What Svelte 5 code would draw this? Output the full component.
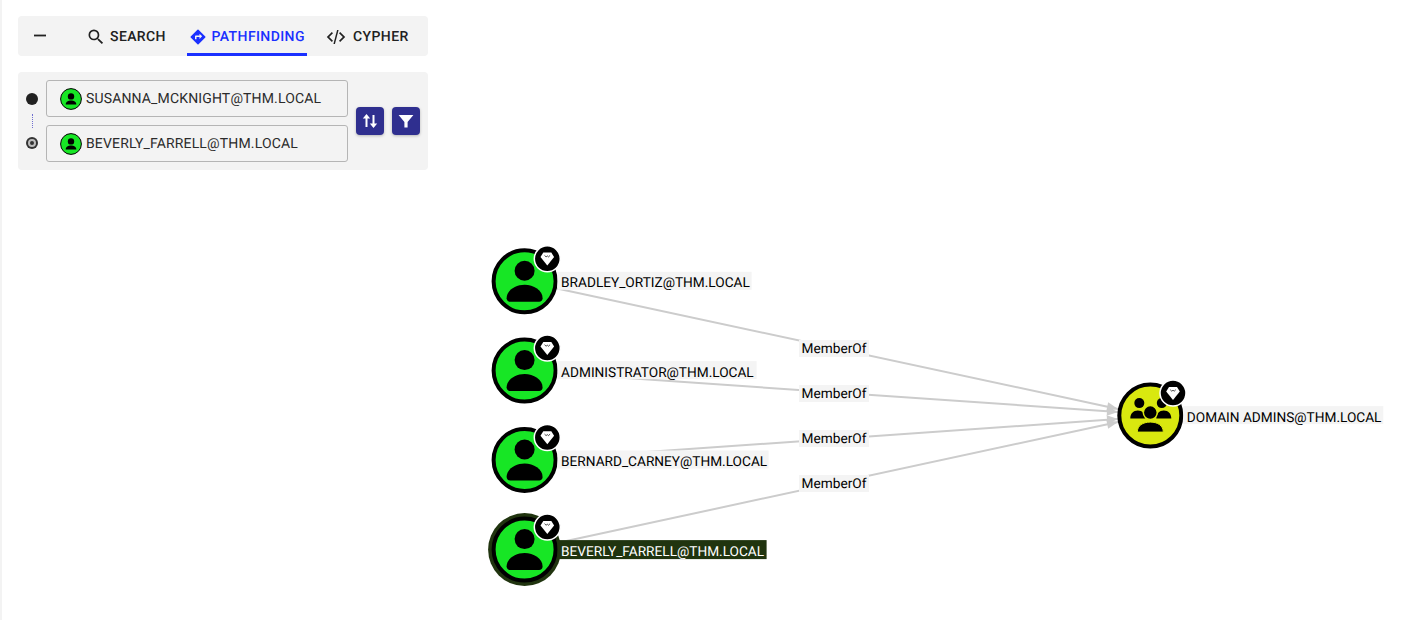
<script lang="ts">
	type GraphNode = { x: number; y: number; label: string; labelWidth: number; selected?: boolean; group?: boolean };

	const nodes: GraphNode[] = [
		{ x: 524.6, y: 281.3, label: 'BRADLEY_ORTIZ@THM.LOCAL', labelWidth: 194 },
		{ x: 524.6, y: 370.6, label: 'ADMINISTRATOR@THM.LOCAL', labelWidth: 199 },
		{ x: 524.6, y: 460, label: 'BERNARD_CARNEY@THM.LOCAL', labelWidth: 211 },
		{ x: 524.6, y: 549.6, label: 'BEVERLY_FARRELL@THM.LOCAL', labelWidth: 209, selected: true },
		{ x: 1150.3, y: 415.6, label: 'DOMAIN ADMINS@THM.LOCAL', labelWidth: 200, group: true }
	];

	const edges = [
		{ from: [524.5, 281.5], to: [1118, 409], lx: 834, ly: 348.5 },
		{ from: [524.5, 371], to: [1118, 412], lx: 834, ly: 393.5 },
		{ from: [524.5, 460.5], to: [1118, 419], lx: 834, ly: 438.5 },
		{ from: [524.5, 550], to: [1118, 422], lx: 834, ly: 483.5 }
	];

	function arrow(from: number[], to: number[]) {
		const a = Math.atan2(to[1] - from[1], to[0] - from[0]);
		const p = (len: number, off: number) => {
			const x = to[0] - len * Math.cos(a) - off * Math.sin(a);
			const y = to[1] - len * Math.sin(a) + off * Math.cos(a);
			return `${x},${y}`;
		};
		return `${to[0]},${to[1]} ${p(11, 4.5)} ${p(11, -4.5)}`;
	}
</script>

<div class="page">
	<aside class="side">
		<div class="tabs">
			<button class="collapse" aria-label="collapse">
				<svg width="14" height="14" viewBox="0 0 14 14"><rect x="1" y="5.6" width="12" height="1.8" fill="#212121" /></svg>
			</button>
			<div class="tab search">
				<svg width="20" height="20" viewBox="0 0 24 24"><path fill="#212121" d="M15.5 14h-.79l-.28-.27A6.47 6.47 0 0 0 16 9.5 6.5 6.5 0 1 0 9.5 16c1.61 0 3.09-.59 4.23-1.57l.27.28v.79l5 4.99L20.49 19l-4.99-5zm-6 0C7.01 14 5 11.99 5 9.5S7.01 5 9.5 5 14 7.01 14 9.5 11.99 14 9.5 14z" /></svg>
				<span>Search</span>
			</div>
			<div class="tab active">
				<svg width="18" height="18" viewBox="0 0 24 24"><path fill="#1a30ff" d="M21.71 11.29l-9-9a1 1 0 0 0-1.42 0l-9 9a1 1 0 0 0 0 1.42l9 9a1 1 0 0 0 1.42 0l9-9a1 1 0 0 0 0-1.42zM14 14.5V12h-4v3H8v-4a1 1 0 0 1 1-1h5V7.5l3.5 3.5-3.5 3.5z" /></svg>
				<span>Pathfinding</span>
			</div>
			<div class="tab cypher">
				<svg width="20" height="20" viewBox="0 0 24 24"><path fill="#212121" d="M8.4 16.6L3.800 12l4.600-4.600L7 6l-6 6 6 6 1.400-1.400zm7.200 0l4.600-4.600-4.600-4.600L17 6l6 6-6 6-1.400-1.400z" /><path fill="#212121" d="M13.300 3.500h1.800L10.700 20.500H8.900z" /></svg>
				<span>Cypher</span>
			</div>
		</div>

		<div class="search-panel">
			<div class="markers">
				<span class="dot"></span>
				<span class="link"></span>
				<span class="target"></span>
			</div>
			<div class="fields">
				<div class="field">
					<span class="avatar">
						<svg width="22" height="22" viewBox="0 0 22 22">
							<circle cx="11" cy="11" r="10.4" fill="#17e625" stroke="#000" stroke-width="1" />
							<circle cx="11" cy="8.4" r="3.2" fill="#000" />
							<path d="M5.700 16.500c0-2.600 2.500-3.900 5.300-3.900s5.300 1.300 5.300 3.900z" fill="#000" />
						</svg>
					</span>
					<span>SUSANNA_MCKNIGHT@THM.LOCAL</span>
				</div>
				<div class="field">
					<span class="avatar">
						<svg width="22" height="22" viewBox="0 0 22 22">
							<circle cx="11" cy="11" r="10.4" fill="#17e625" stroke="#000" stroke-width="1" />
							<circle cx="11" cy="8.4" r="3.2" fill="#000" />
							<path d="M5.700 16.500c0-2.600 2.500-3.900 5.300-3.900s5.300 1.300 5.300 3.900z" fill="#000" />
						</svg>
					</span>
					<span>BEVERLY_FARRELL@THM.LOCAL</span>
				</div>
			</div>
			<button class="square" aria-label="swap">
				<svg width="18" height="18" viewBox="0 0 18 18">
					<path fill="#fff" d="M5.500 2 1.800 6.600h2.700V15h2V6.600h2.700z" />
					<path fill="#fff" d="M12.500 16l3.700-4.600h-2.700V3h-2v8.400H8.800z" />
				</svg>
			</button>
			<button class="square" aria-label="filter">
				<svg width="18" height="18" viewBox="0 0 18 18">
					<path fill="#fff" d="M1.600 3h14.800L10.600 10v5.400H7.400V10z" />
				</svg>
			</button>
		</div>
	</aside>

	<svg class="graph" width="1405" height="620" viewBox="0 0 1405 620">
		{#each edges as e}
			<line x1={e.from[0]} y1={e.from[1]} x2={e.to[0]} y2={e.to[1]} stroke="#cccccc" stroke-width="2" />
			<polygon points={arrow(e.from, e.to)} fill="#cccccc" />
		{/each}
		{#each edges as e}
			<rect x={e.lx - 35} y={e.ly - 8.5} width="70" height="17" fill="#f4f4f4" />
			<text x={e.lx} y={e.ly + 4.5} text-anchor="middle" class="edge-label">MemberOf</text>
		{/each}

		{#each nodes as n}
			<g transform="translate({n.x} {n.y})">
				{#if n.selected}
					<circle r="36.500" fill="#20340f" />
				{/if}
				<circle r="31" fill={n.group ? '#d9e80f' : '#17e625'} stroke="#000" stroke-width="4" />
				{#if n.group}
					<circle cx="-11" cy="-12.500" r="5" fill="#000" />
					<circle cx="11.500" cy="-12.500" r="5" fill="#000" />
					<path d="M-20 3c0-5 3-8 7.500-8s7.500 3 7.500 8zM6 3c0-5 3-8 7.500-8s7.500 3 7.500 8z" fill="#000" />
					<circle cy="-3" r="7" fill="#000" stroke="#d9e80f" stroke-width="1.500" />
					<path d="M-13 16.500c0-6.500 5.500-10 13-10s13 3.500 13 10z" fill="#000" stroke="#d9e80f" stroke-width="1" />
				{:else}
					<circle cy="-10.500" r="10" fill="#000" />
					<path d="M-18 17C-18 9-9 3.500 0 3.500S18 9 18 17c0 2-1.500 3.500-3.500 3.500h-29C-16.500 20.500-18 19-18 17z" fill="#000" />
				{/if}
				<g transform="translate(22.700 -22.500)">
					<circle r="13" fill="#000" stroke="#fff" stroke-width="1.500" />
					<path d="M-4-6.200H4L6.800-1.700 0 6.800-6.800-1.700z" fill="#fff" />
					<path d="M-2.800-3.400-1.200-1.900 0-2.900 1.200-1.900 2.800-3.400" fill="none" stroke="#000" stroke-width="0.700" />
				</g>
				<rect x="33" y="-9.500" width={n.labelWidth} height={n.selected ? 19 : 18} fill={n.selected ? '#20340f' : '#f4f4f4'} />
				<text x="36.500" y="6" class="node-label" fill={n.selected ? '#ffffff' : '#000000'}>{n.label}</text>
			</g>
		{/each}
	</svg>
</div>

<style>
	:global(body) {
		margin: 0;
		background: #fff;
	}

	.page {
		position: relative;
		width: 1405px;
		height: 620px;
		overflow: hidden;
		box-sizing: border-box;
		border-left: 2px solid #f3f3f3;
		font-family: Roboto, sans-serif;
		color: #212121;
		text-rendering: geometricPrecision;
	}

	.graph {
		position: absolute;
		left: -2px;
		top: 0;
	}

	.side {
		position: relative;
		z-index: 1;
		width: 410px;
		margin-left: 16px;
		padding-top: 16px;
		display: flex;
		flex-direction: column;
		gap: 16px;
	}

	.tabs {
		height: 40px;
		display: flex;
		align-items: stretch;
		background: #f3f3f3;
		border-radius: 4px;
	}

	.collapse {
		width: 44px;
		border: 0;
		background: none;
		padding: 0;
		display: flex;
		align-items: center;
		justify-content: center;
	}

	.tab {
		display: flex;
		align-items: center;
		box-sizing: border-box;
		height: 40px;
		font-size: 14px;
		font-weight: 500;
		letter-spacing: 0.4px;
		text-transform: uppercase;
		border-bottom: 3px solid transparent;
		padding-top: 4px;
	}

	.tab.search {
		margin-left: 24px;
		width: 81px;
		gap: 4px;
	}

	.tab.active {
		margin-left: 20px;
		width: 120px;
		gap: 5px;
		padding-left: 1.500px;
		color: #1a30ff;
		border-bottom-color: #1a30ff;
	}

	.tab.cypher {
		margin-left: 19px;
		width: 83px;
		gap: 7px;
	}

	.search-panel {
		height: 98px;
		box-sizing: border-box;
		display: flex;
		align-items: center;
		background: #f3f3f3;
		border-radius: 4px;
		padding: 0 8px;
	}

	.markers {
		width: 12px;
		margin-right: 8px;
		display: flex;
		flex-direction: column;
		align-items: center;
	}

	.dot {
		width: 12px;
		height: 12px;
		border-radius: 50%;
		background: #212121;
	}

	.link {
		height: 14px;
		margin: 9px 0 9px;
		border-left: 1px dotted #6f6fd0;
	}

	.target {
		width: 4px;
		height: 4px;
		margin: 2px 0;
		border-radius: 50%;
		background: #333;
		border: 2px solid #bdbdbd;
		box-shadow: 0 0 0 2px #333;
	}

	.fields {
		width: 302px;
		display: flex;
		flex-direction: column;
		gap: 8px;
		margin-right: 8px;
	}

	.field {
		height: 37px;
		box-sizing: border-box;
		border: 1px solid #b5b5b5;
		border-radius: 3px;
		display: flex;
		align-items: center;
		padding-left: 13px;
		font-size: 14px;
		letter-spacing: 0.15px;
		line-height: 1;
		color: #2b2b2b;
	}

	.avatar {
		display: flex;
		margin-right: 4px;
	}

	.square {
		width: 28px;
		height: 28px;
		padding: 0;
		border: 0;
		border-radius: 4px;
		background: #2f2f8f;
		display: flex;
		align-items: center;
		justify-content: center;
		box-shadow: 0 1px 3px rgba(0, 0, 0, 0.25);
		margin-right: 8px;
	}

	.square:last-child {
		margin-right: 0;
	}

	.node-label,
	.edge-label {
		font-family: Roboto, sans-serif;
		font-size: 13.660px;
	}

	.edge-label {
		fill: #000;
	}
</style>
